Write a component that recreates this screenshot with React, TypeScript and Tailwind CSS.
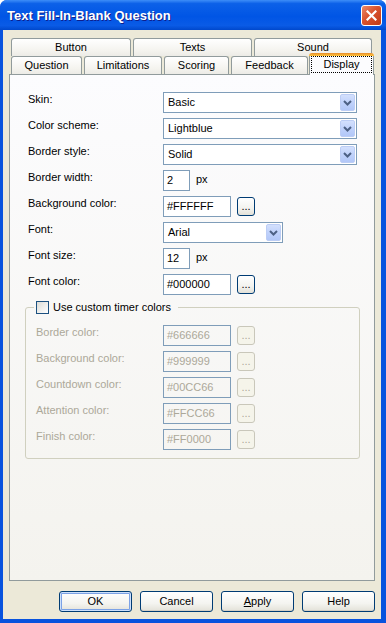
import React from "react";

const Tab = ({ label, w }: { label: string; w: string }) => (
  <div
    className={`${w} flex h-[18px] items-center justify-center rounded-t-[3px] border-x border-t border-[#919B9C] bg-[linear-gradient(to_bottom,#FFFFFF,#F4F3EE_70%,#ECEBE6)] leading-[13px]`}
  >
    {label}
  </div>
);

const ActiveTab = ({ label }: { label: string }) => (
  <div className="relative z-10 -mb-[1px] -ml-[1px] -mt-[3px] flex h-[22px] w-[65px] flex-col rounded-t-[3px] bg-[#FCFCFE]">
    <div className="h-[3px] rounded-t-[3px] bg-[linear-gradient(to_bottom,#E68B2C,#FFC73C)]" />
    <div className="flex flex-1 border-x border-[#919B9C] px-[1px] pb-[2px]">
      <div className="flex flex-1 items-center justify-center border border-dotted border-black leading-[13px]">
        {label}
      </div>
    </div>
  </div>
);

const Select = ({ value, w }: { value: string; w: string }) => (
  <div className={`${w} flex h-[21px] items-center border border-[#7F9DB9] bg-white`}>
    <span className="flex-1 pl-[4px] leading-[13px]">{value}</span>
    <span className="mr-[1px] flex h-[17px] w-[15px] items-center justify-center rounded-[2px] border border-[#BCCDF5] bg-[linear-gradient(to_bottom,#D3E0FD,#C0D2FB_50%,#B2C7F8)]">
      <svg width="9" height="6" viewBox="0 0 9 6">
        <path d="M1 1 L4.5 4.5 L8 1" fill="none" stroke="#4D6185" strokeWidth="2" />
      </svg>
    </span>
  </div>
);

const Input = ({ value, w, disabled }: { value: string; w: string; disabled?: boolean }) => (
  <div
    className={`${w} flex h-[21px] items-center border border-[#7F9DB9] pl-[3px] leading-[13px] ${
      disabled ? "text-[#ACA899]" : "bg-white"
    }`}
  >
    {value}
  </div>
);

const DotsButton = ({ disabled }: { disabled?: boolean }) => (
  <div
    className={`mt-[1px] flex h-[19px] w-[18px] items-end justify-center rounded-[3px] border pb-[3px] leading-none ${
      disabled
        ? "border-[#C9C7BA] bg-[#F5F4EA] text-[#ACA899]"
        : "border-[#003C74] bg-[linear-gradient(to_bottom,#FFFFFF,#F3F3EF_60%,#E3E1D8)] text-black"
    }`}
  >
    ...
  </div>
);

const Row = ({
  label,
  children,
  lw,
  muted,
}: {
  label: string;
  children: React.ReactNode;
  lw: string;
  muted?: boolean;
}) => (
  <div className="flex h-[21px] items-start">
    <div className={`${lw} shrink-0 pt-[1px] leading-[13px] ${muted ? "text-[#ACA899]" : ""}`}>{label}</div>
    <div className="flex items-start gap-[6px]">{children}</div>
  </div>
);

const Px = () => <span className="pt-[3px] leading-[13px]">px</span>;

const DlgButton = ({ children, def }: { children: React.ReactNode; def?: boolean }) => (
  <button
    className={`h-[21px] w-[73px] rounded-[3px] border border-[#003C74] bg-[linear-gradient(to_bottom,#FFFFFF,#F4F4F0_60%,#E3E1D8)] text-[11px] leading-none text-black ${
      def ? "shadow-[inset_0_0_0_1px_#CDE0FB,inset_0_0_0_2px_#7CA2E6]" : "shadow-[inset_0_-1px_0_#D6D0C5]"
    }`}
  >
    {children}
  </button>
);

export default function App() {
  const groupRows = [
    ["Border color:", "#666666"],
    ["Background color:", "#999999"],
    ["Countdown color:", "#00CC66"],
    ["Attention color:", "#FFCC66"],
    ["Finish color:", "#FF0000"],
  ];

  return (
    <div className="h-[623px] w-[386px] bg-white font-['Liberation_Sans',Arial,sans-serif] text-[11px] text-black">
      <div className="flex h-full w-full flex-col rounded-t-[7px] bg-[#0853DE]">
        <div className="flex h-[30px] shrink-0 items-center justify-between rounded-t-[7px] bg-[linear-gradient(to_bottom,#3D8EF8_0%,#0C61E8_12%,#0055E5_55%,#0A5BE6_85%,#0048CC_100%)] pl-[7px] pr-[4px]">
          <span className="pt-[1px] text-[13px] font-bold leading-none text-white [text-shadow:1px_1px_0_#0F1E8C]">
            Text Fill-In-Blank Question
          </span>
          <div className="flex h-[21px] w-[21px] items-center justify-center rounded-[3px] border border-white bg-[linear-gradient(135deg,#EC8A6A,#D9522E_45%,#C13A16)]">
            <svg width="11" height="11" viewBox="0 0 11 11">
              <path d="M1.5 1.5 L9.5 9.5 M9.5 1.5 L1.5 9.5" stroke="#FFFFFF" strokeWidth="2.2" strokeLinecap="square" />
            </svg>
          </div>
        </div>

        <div className="mb-[4px] ml-[3px] mr-[5px] flex flex-1 flex-col bg-[#ECE9D8] px-[6px]">
          <div className="pl-[2px] pt-[8px]">
            <div className="flex gap-[2px]">
              <Tab label="Button" w="w-[120px]" />
              <Tab label="Texts" w="w-[119px]" />
              <Tab label="Sound" w="w-[118px]" />
            </div>
            <div className="flex h-[18px] items-end gap-[2px]">
              <Tab label="Question" w="w-[71px]" />
              <Tab label="Limitations" w="w-[78px]" />
              <Tab label="Scoring" w="w-[65px]" />
              <Tab label="Feedback" w="w-[77px]" />
              <ActiveTab label="Display" />
            </div>
          </div>

          <div className="flex h-[507px] flex-col gap-[5px] border border-[#919B9C] bg-[linear-gradient(to_bottom,#FCFCFE,#F4F3EE)] pl-[15px] pr-[14px] pt-[17px]">
            <div className="flex flex-col gap-[5px] pl-[3px]">
              <Row label="Skin:" lw="w-[135px]">
                <Select value="Basic" w="w-[194px]" />
              </Row>
              <Row label="Color scheme:" lw="w-[135px]">
                <Select value="Lightblue" w="w-[194px]" />
              </Row>
              <Row label="Border style:" lw="w-[135px]">
                <Select value="Solid" w="w-[194px]" />
              </Row>
              <Row label="Border width:" lw="w-[135px]">
                <Input value="2" w="w-[27px]" />
                <Px />
              </Row>
              <Row label="Background color:" lw="w-[135px]">
                <Input value="#FFFFFF" w="w-[68px]" />
                <DotsButton />
              </Row>
              <Row label="Font:" lw="w-[135px]">
                <Select value="Arial" w="w-[120px]" />
              </Row>
              <Row label="Font size:" lw="w-[135px]">
                <Input value="12" w="w-[27px]" />
                <Px />
              </Row>
              <Row label="Font color:" lw="w-[135px]">
                <Input value="#000000" w="w-[68px]" />
                <DotsButton />
              </Row>
            </div>

            <fieldset className="mt-[1px] rounded-[3px] border border-[#D0D0BF] p-0">
              <legend className="ml-[8px] p-0">
                <span className="flex h-[13px] items-center gap-[4px] pl-[2px] pr-[7px]">
                  <span className="h-[13px] w-[13px] border border-[#1C5180] bg-[linear-gradient(135deg,#DCDCD7,#FFFFFF)]" />
                  <span className="leading-[13px]">Use custom timer colors</span>
                </span>
              </legend>
              <div className="flex flex-col gap-[5px] pb-[8px] pl-[10px] pt-[11px]">
                {groupRows.map(([label, value]) => (
                  <Row key={label} label={label} lw="w-[127px]" muted>
                    <Input value={value} w="w-[68px]" disabled />
                    <DotsButton disabled />
                  </Row>
                ))}
              </div>
            </fieldset>
          </div>

          <div className="mt-[10px] flex justify-end gap-[8px]">
            <DlgButton def>OK</DlgButton>
            <DlgButton>Cancel</DlgButton>
            <DlgButton>
              <span className="underline">A</span>pply
            </DlgButton>
            <DlgButton>Help</DlgButton>
          </div>
        </div>
      </div>
    </div>
  );
}
